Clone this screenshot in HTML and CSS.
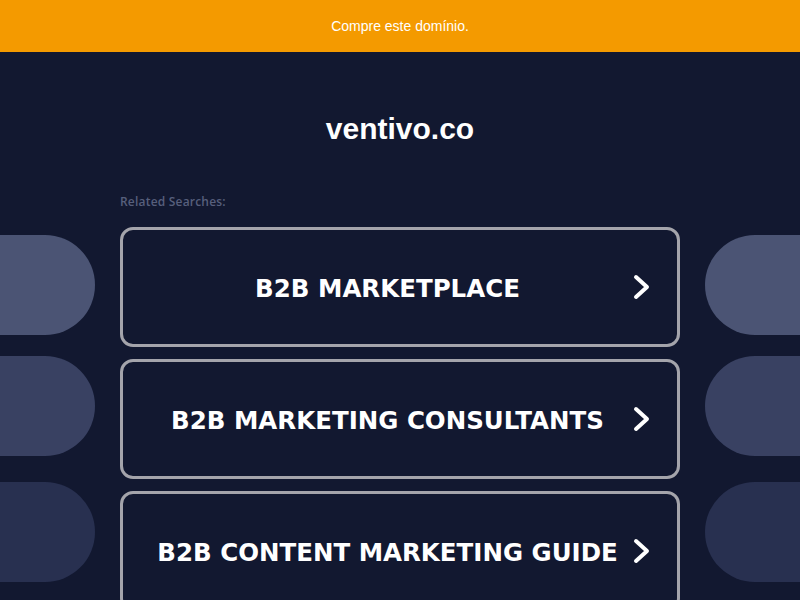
FILE: index.html
```html
<!DOCTYPE html>
<html lang="pt">
<head>
<meta charset="utf-8">
<title>ventivo.co</title>
<link rel="stylesheet" href="styles.css">
</head>
<body>
<div class="topbar">Compre este domínio.</div>
<div class="deco">
  <div class="pill pl p1"></div>
  <div class="pill pl p2"></div>
  <div class="pill pl p3"></div>
  <div class="pill pr p1"></div>
  <div class="pill pr p2"></div>
  <div class="pill pr p3"></div>
</div>
<main class="main">
  <h1 class="domain">ventivo.co</h1>
  <div class="related">
    <div class="label">Related Searches:</div>
    <a class="item" href="#"><span class="txt">B2B MARKETPLACE</span><svg class="chev" viewBox="0 0 20 26" width="20" height="26"><path d="M4 3 L15 13 L4 23" fill="none" stroke="#fff" stroke-width="4" stroke-linecap="round" stroke-linejoin="round"/></svg></a>
    <a class="item" href="#"><span class="txt">B2B MARKETING CONSULTANTS</span><svg class="chev" viewBox="0 0 20 26" width="20" height="26"><path d="M4 3 L15 13 L4 23" fill="none" stroke="#fff" stroke-width="4" stroke-linecap="round" stroke-linejoin="round"/></svg></a>
    <a class="item" href="#"><span class="txt">B2B CONTENT MARKETING GUIDE</span><svg class="chev" viewBox="0 0 20 26" width="20" height="26"><path d="M4 3 L15 13 L4 23" fill="none" stroke="#fff" stroke-width="4" stroke-linecap="round" stroke-linejoin="round"/></svg></a>
  </div>
</main>
</body>
</html>
```
FILE: styles.css
```css
html, body {
  margin: 0;
  padding: 0;
  height: 100%;
  overflow: hidden;
}
body {
  background: #121830;
  font-family: "Liberation Sans", Arial, sans-serif;
  position: relative;
}
.topbar {
  height: 52px;
  background: #f49a00;
  color: #fff;
  font-size: 14px;
  display: flex;
  align-items: center;
  justify-content: center;
}
.deco {
  position: absolute;
  inset: 0;
  overflow: hidden;
  pointer-events: none;
}
.pill {
  position: absolute;
  width: 195px;
  height: 100px;
  border-radius: 50px;
}
.pl { left: -100px; }
.pr { left: 705px; }
.p1 { top: 235px; background: #4b5474; }
.p2 { top: 356px; background: #394162; }
.p3 { top: 482px; background: #283050; }
.main {
  position: relative;
  width: 560px;
  margin: 0 auto;
}
.domain {
  margin: 59px 0 0;
  height: 36px;
  line-height: 36px;
  font-size: 30px;
  font-weight: bold;
  color: #fff;
  text-align: center;
}
.related {
  margin-top: 47px;
  display: flex;
  flex-direction: column;
  gap: 12px;
}
.label {
  font-family: "Open Sans", sans-serif;
  font-weight: 600;
  font-size: 12px;
  letter-spacing: 0.2px;
  line-height: 16px;
  color: #575f7c;
  margin-bottom: 5px;
}
.item {
  box-sizing: border-box;
  height: 120px;
  border: 3px solid #a4a4ab;
  border-radius: 13px;
  background: #121830;
  display: flex;
  align-items: center;
  padding: 0 25px 0 20px;
  text-decoration: none;
}
.txt {
  flex: 1;
  text-align: center;
  font-family: "DejaVu Sans", Verdana, sans-serif;
  font-weight: bold;
  font-size: 24.5px;
  padding-top: 3px;
  color: #fff;
  white-space: nowrap;
}
.chev {
  flex: none;
  display: block;
}
```
